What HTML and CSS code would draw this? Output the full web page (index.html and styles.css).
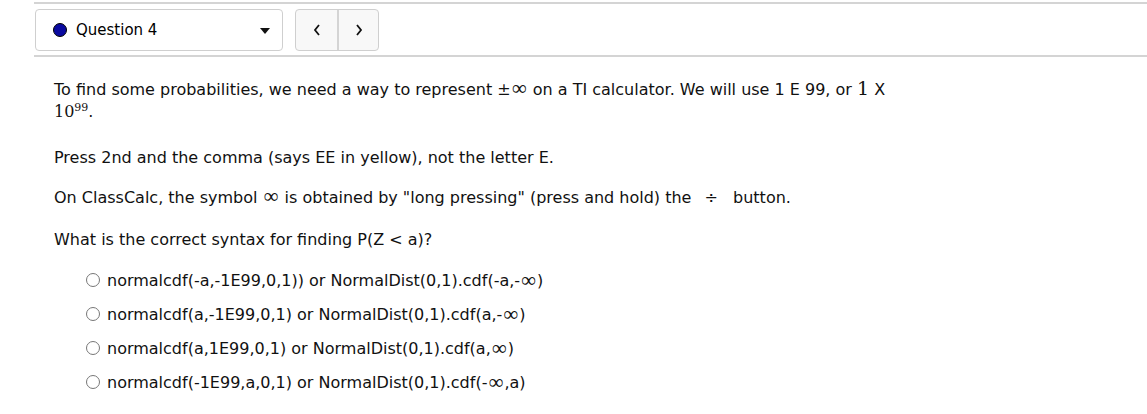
FILE: index.html
```html
<!DOCTYPE html>
<html lang="en">
<head>
    <meta charset="UTF-8">
    <title>Question 4</title>
    <link rel="stylesheet" href="styles.css">
</head>
<body>
    <div class="page">
        <div class="nav_bar">
            <div class="question_select">
                <span class="dot"></span>
                <span class="select_label">Question 4</span>
                <span class="caret"></span>
            </div>
            <div class="nav_buttons">
                <button type="button" class="nav_btn">
                    <svg width="10" height="14" viewBox="0 0 10 14"><polyline points="7,2 3,7 7,12" fill="none" stroke="#111" stroke-width="1.8"/></svg>
                </button>
                <button type="button" class="nav_btn">
                    <svg width="10" height="14" viewBox="0 0 10 14"><polyline points="3,2 7,7 3,12" fill="none" stroke="#111" stroke-width="1.8"/></svg>
                </button>
            </div>
        </div>

        <div class="question">
            <p class="first">To find some probabilities, we need a way to represent <span class="math">&plusmn;</span><span class="inf">&infin;</span> on a TI calculator. We will use 1 E 99, or <span class="math one">1</span> X<br><span class="math">10<sup>99</sup></span>.</p>
            <p>Press 2nd and the comma (says EE in yellow), not the letter E.</p>
            <p class="calc">On ClassCalc, the symbol <span class="inf">&infin;</span> is obtained by "long pressing" (press and hold) the <span class="div_sign">&divide;</span> button.</p>
            <p class="ask">What is the correct syntax for finding P(Z &lt; a)?</p>

            <ul class="answers">
                <li><span class="radio"></span>normalcdf(-a,-1E99,0,1)) or NormalDist(0,1).cdf(-a,-<span class="inf">&infin;</span>)</li>
                <li><span class="radio"></span>normalcdf(a,-1E99,0,1) or NormalDist(0,1).cdf(a,-<span class="inf">&infin;</span>)</li>
                <li><span class="radio"></span>normalcdf(a,1E99,0,1) or NormalDist(0,1).cdf(a,<span class="inf">&infin;</span>)</li>
                <li><span class="radio"></span>normalcdf(-1E99,a,0,1) or NormalDist(0,1).cdf(-<span class="inf">&infin;</span>,a)</li>
            </ul>
        </div>
    </div>
</body>
</html>
```

FILE: styles.css
```css
/* General */
*{
    font-family: 'DejaVu Sans', sans-serif;
}
body{
    margin: 0px;
    padding: 0px;
    background-color: white;
    color: #111;
}
.page{
    margin-left: 34px;
    padding-top: 2px;
}

/* Top bar */
.nav_bar{
    display: flex;
    align-items: center;
    gap: 12px;
    border-top: 2px solid #d4d4d4;
    border-bottom: 2px solid #d4d4d4;
    padding: 5px 0px 4px 1px;
}
.question_select{
    display: flex;
    align-items: center;
    width: 248px;
    height: 42px;
    box-sizing: border-box;
    border: 1px solid #cfcfcf;
    border-radius: 4px;
    padding: 0px 12px 0px 17px;
}
.dot{
    width: 14px;
    height: 14px;
    border-radius: 50%;
    background-color: #0a0aa0;
    border: 1px solid #000;
    box-sizing: border-box;
    margin-right: 9px;
}
.select_label{
    flex: 1;
    font-size: 15px;
    color: #000;
}
.caret{
    width: 0px;
    height: 0px;
    border-left: 5px solid transparent;
    border-right: 5px solid transparent;
    border-top: 6px solid #111;
    margin-top: 2px;
}
.nav_buttons{
    display: flex;
    height: 42px;
    border: 1px solid #cfcfcf;
    border-radius: 4px;
    background-color: #f8f8f8;
    box-sizing: border-box;
    overflow: hidden;
}
.nav_btn{
    width: 41px;
    border: none;
    background: transparent;
    padding: 0px;
    display: flex;
    align-items: center;
    justify-content: center;
}
.nav_btn + .nav_btn{
    border-left: 2px solid #d4d4d4;
}

/* Question */
.question{
    padding: 10px 20px;
    font-size: 16px;
}
.question p{
    margin: 0px 0px 18px 0px;
    line-height: 22px;
}
.question p.first{
    margin-top: 10px;
    margin-bottom: 24px;
}
.question p.calc{
    margin-bottom: 20px;
}
.question p.ask{
    margin-bottom: 12px;
}
.math{
    font-family: 'DejaVu Serif', serif;
    font-size: 16px;
}
.math.one{
    font-size: 19px;
}
.math sup{
    font-family: 'DejaVu Serif', serif;
    font-size: 11px;
    line-height: 0;
}
.inf{
    font-family: 'Liberation Serif', serif;
    font-size: 21px;
    line-height: 0;
    padding: 0px 1px;
}
.div_sign{
    padding: 0px 10px 0px 8px;
}
.answers{
    list-style: none;
    padding: 0px 0px 0px 32px;
    margin: 0px;
}
.answers li{
    display: flex;
    align-items: center;
    height: 34px;
}
.radio{
    width: 12px;
    height: 12px;
    border: 1px solid #777;
    border-radius: 50%;
    margin-right: 7px;
}
```
